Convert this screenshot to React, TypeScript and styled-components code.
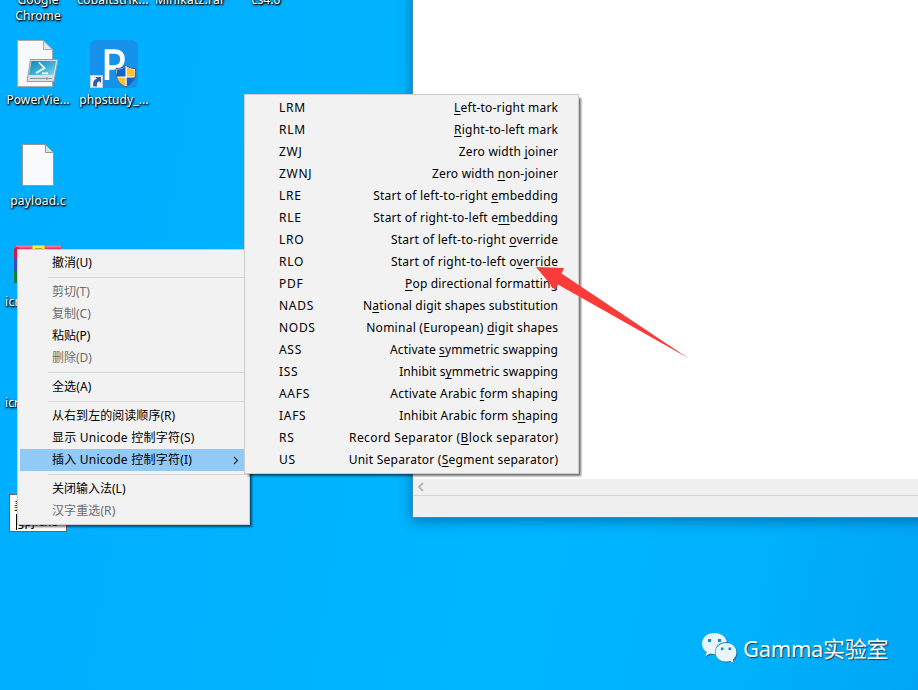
import React from "react";
import styled, { createGlobalStyle, css } from "styled-components";

const Global = createGlobalStyle`
  * { box-sizing: border-box; }
  body { margin: 0; overflow: hidden; }
`;

const uiFont = css`
  font-family: "Noto Sans", "Noto Sans CJK SC", sans-serif;
  font-size: 12px;
`;

const Desktop = styled.main`
  position: relative;
  width: 918px;
  height: 690px;
  overflow: hidden;
  cursor: default;
  background: linear-gradient(100deg, #00adff 0%, #00b2ff 32%, #00b6ff 60%, #00b1fb 82%, #00a6f6 100%);
  ${uiFont}
`;

const Shortcut = styled.div<{ $x: number; $y: number; $w?: number }>`
  position: absolute;
  left: ${(p) => p.$x}px;
  top: ${(p) => p.$y}px;
  width: ${(p) => p.$w ?? 76}px;
  display: flex;
  flex-direction: column;
  align-items: center;
`;

const ShortcutLabel = styled.span<{ $gap?: number; $track?: number }>`
  margin-top: ${(p) => p.$gap ?? 0}px;
  color: #fff;
  line-height: 16px;
  white-space: nowrap;
  text-align: center;
  letter-spacing: ${(p) => p.$track ?? 0.1}px;
  text-shadow: 1px 1px 1px #000, 0 1px 2px rgba(0, 0, 0, 0.85), 1px 1px 3px rgba(0, 0, 0, 0.6);
`;

const EditorWindow = styled.section`
  position: absolute;
  left: 412px;
  top: -10px;
  width: 520px;
  height: 528px;
  display: flex;
  flex-direction: column;
  background: #fff;
  border-left: 1px solid #3d8fb8;
  border-bottom: 1px solid #3d8fb8;
  box-shadow: 0 3px 12px rgba(0, 30, 70, 0.42);
`;

const EditorBody = styled.div`
  flex: 1;
`;

const ScrollTrack = styled.div`
  height: 16px;
  padding: 3px 4px;
  background: #f0f0f0;
  svg { display: block; }
`;

const StatusBar = styled.div`
  height: 22px;
  background: #f0f0f0;
  border-top: 1px solid #d7d7d7;
`;

const RenameBox = styled.div`
  position: absolute;
  left: 9px;
  top: 494px;
  width: 58px;
  height: 38px;
  padding: 3px 3px 0 4px;
  background: #fff;
  border: 1px solid #646464;
  color: #000;
  line-height: 16px;
`;

const RenameLine = styled.div<{ $caret?: boolean }>`
  height: 16px;
  white-space: nowrap;
  margin-left: ${(p) => (p.$caret ? 2 : 0)}px;
  border-left: ${(p) => (p.$caret ? "1px solid #000" : "none")};
`;

const Menu = styled.ul<{ $x: number; $y: number; $w: number }>`
  position: absolute;
  left: ${(p) => p.$x}px;
  top: ${(p) => p.$y}px;
  width: ${(p) => p.$w}px;
  margin: 0;
  padding: 2px;
  list-style: none;
  color: #000;
  background: #f2f2f2;
  border: 1px solid #ccc;
  box-shadow: 3px 3px 2px -1px rgba(0, 0, 0, 0.55);
`;

const MenuItem = styled.li<{ $active?: boolean; $disabled?: boolean; $right?: number }>`
  display: flex;
  align-items: center;
  justify-content: space-between;
  height: 22px;
  padding: 0 ${(p) => p.$right ?? 18}px 0 32px;
  line-height: 22px;
  white-space: nowrap;
  color: ${(p) => (p.$disabled ? "#6d6d6d" : "#000")};
  background: ${(p) => (p.$active ? "#91c9f7" : "transparent")};
`;

const Divider = styled.li`
  height: 1px;
  margin: 3px 0 3px 28px;
  background: #d7d7d7;
`;

const Track = styled.span<{ $track: number }>`
  letter-spacing: ${(p) => p.$track}px;
  margin-right: ${(p) => -p.$track}px;
`;

const Mnemonic = styled.span`
  text-decoration: underline;
  text-decoration-thickness: 1px;
  text-underline-offset: 2px;
  text-decoration-skip-ink: none;
`;

const Pointer = styled.svg`
  position: absolute;
  left: 530px;
  top: 258px;
`;

const Watermark = styled.div`
  position: absolute;
  left: 701px;
  top: 629px;
  display: flex;
  align-items: center;
  gap: 6px;
  color: #fff;
  font-size: 22px;
  line-height: 38px;
  letter-spacing: -0.35px;
  white-space: nowrap;
  text-shadow: 1px 1px 1px rgba(30, 50, 70, 0.9);
  svg { filter: drop-shadow(1px 1px 0 rgba(30, 80, 120, 0.7)); }
`;

const PowerShellFile = () => (
  <svg width="44" height="50" viewBox="0 0 44 50">
    <defs>
      <linearGradient id="ps" x1="0" y1="0" x2="1" y2="1">
        <stop offset="0" stopColor="#1683b4" />
        <stop offset=".5" stopColor="#38aed3" />
        <stop offset="1" stopColor="#87d5e8" />
      </linearGradient>
    </defs>
    <path d="M1.5 1.5h26l9 9v37h-35z" fill="#f8f9fa" stroke="#a6a9ab" />
    <path d="M27.5 1.5v9h9z" fill="#e4e7e9" stroke="#a6a9ab" />
    <path d="M14.500 20.500h27.500l-4 22h-27z" fill="#d9e2e6" stroke="#8ba0a9" />
    <path d="M15.500 22h24.500l-2.500 14h-24.500z" fill="url(#ps)" />
    <path d="M23 23.500l5.500 5.500-8.500 5M26 34.300h6" fill="none" stroke="#fff" strokeWidth="1.700" />
    <path d="M14 39.500h22M31 38v3" stroke="#8b979d" />
  </svg>
);

const PhpStudy = () => (
  <svg width="48" height="48" viewBox="0 0 48 48">
    <rect width="48" height="48" rx="6" fill="#1792ec" />
    <path d="M17 40V11.500h7c6 0 8.500 3 8.500 7.500 0 5-3.500 8.500-9 8.500H17" fill="none" stroke="#fff" strokeWidth="4.600" />
    <path d="M36 25.500c3 2.500 6 3 9.500 3 .5 8-1 14-9.500 18.500-8.500-4.500-10.500-10.500-10-18.500 4 0 7-.5 10-3z" fill="#fff" stroke="#405a70" />
    <path d="M35.500 26.500c-2.500 2-5 2.700-8.500 3v7h8.500z" fill="#1165c1" />
    <path d="M36.700 26.500c2.500 2 5 2.700 8 3v7h-8z" fill="#ffc13b" />
    <path d="M35.500 37.500h-8.400c.8 3.500 3.500 6.500 8.400 8.800z" fill="#ffc13b" />
    <path d="M36.700 37.500h7.900c-.8 3.500-3.500 6.500-7.900 8.800z" fill="#1165c1" />
    <rect x=".5" y="35.500" width="12" height="12" fill="#f3f5f8" stroke="#c7ced5" />
    <path d="M3.500 46.500c-1-4 .3-7 3.500-7.700L5 37h6v6l-1.800-1.800c-2.200.8-2.700 2.600-2.200 5.300z" fill="#2d5fa6" />
  </svg>
);

const BlankFile = () => (
  <svg width="32" height="42" viewBox="0 0 32 42">
    <path d="M.5.500h23l8 8v33H.5z" fill="#f9fafb" stroke="#92979a" />
    <path d="M23.500.500v8h8z" fill="#dcdfe1" stroke="#92979a" />
  </svg>
);

const Archive = () => (
  <svg width="48" height="40" viewBox="0 0 48 40">
    <path d="M2 1h45v12H0z" fill="#eb3568" />
    <path d="M2 1.500h45" stroke="#f1749c" strokeWidth="2" />
    <path d="M0 4q4-4 5 0v10H0z" fill="#d8163f" />
    <path d="M0 13h5v13H0z" fill="#4247b8" />
    <path d="M0 26h5v12H0z" fill="#167b3b" />
    <path d="M18 0h13v7H18z" fill="#ffe746" stroke="#a8971e" />
    <path d="M21 3h7v4h-7z" fill="#b2a33b" />
  </svg>
);

const WeChat = () => (
  <svg width="36" height="32" viewBox="0 0 36 32">
    <path d="M13.500 1C6 1 1 5.700 1 11.800c0 3.500 1.800 6.500 4.900 8.500L4.500 24l4.800-2.400c1.700.5 3.200.7 5 .7C13 15.500 17.500 10 26 10 24.800 4.600 20 1 13.500 1z" fill="#e8f7ff" />
    <path d="M25 11c-6 0-10.500 4-10.500 9.200C14.500 25.600 19 29.600 25 29.600c1.500 0 2.800-.2 4.100-.7l3.600 2-1-3.300c2.300-1.700 3.700-4.300 3.700-7.400C35.400 15 31 11 25 11z" fill="#e8f7ff" />
    <path d="M7 7h3v3H7zM17 7h3v3h-3zM20 15.500h2.500V18H20zM27.500 15.500H30V18h-2.500z" fill="#1689bd" />
  </svg>
);

type Entry = { label: string; disabled?: boolean; active?: boolean; track?: number } | null;

const editMenu: Entry[] = [
  { label: "撤消(U)" },
  null,
  { label: "剪切(T)", disabled: true },
  { label: "复制(C)", disabled: true },
  { label: "粘贴(P)" },
  { label: "删除(D)", disabled: true },
  null,
  { label: "全选(A)", track: 0.1 },
  null,
  { label: "从右到左的阅读顺序(R)", track: 0.05 },
  { label: "显示 Unicode 控制字符(S)", track: 0.23 },
  { label: "插入 Unicode 控制字符(I)", active: true, track: 0.23 },
  null,
  { label: "关闭输入法(L)" },
  { label: "汉字重选(R)", disabled: true, track: 0.1 },
];

// An ampersand precedes the access key; the last value is the tracking in px.
const controlCharacters: [string, string, number][] = [
  ["LRM", "&Left-to-right mark", 0.2],
  ["RLM", "&Right-to-left mark", 0.25],
  ["ZWJ", "Zero width &joiner", 0.2],
  ["ZWNJ", "Zero width &non-joiner", 0.2],
  ["LRE", "Start of left-to-right &embedding", 0.24],
  ["RLE", "Start of right-to-left e&mbedding", 0.24],
  ["LRO", "Start of left-to-right &override", 0.25],
  ["RLO", "Start of right-to-left o&verride", 0.25],
  ["PDF", "&Pop directional formatting", 0.17],
  ["NADS", "N&ational digit shapes substitution", 0.155],
  ["NODS", "Nominal (European) &digit shapes", 0.26],
  ["ASS", "Activate &symmetric swapping", 0.12],
  ["ISS", "Inhibit s&ymmetric swapping", 0.08],
  ["AAFS", "Activate Arabic &form shaping", 0.2],
  ["IAFS", "Inhibit Arabic form s&haping", 0.17],
  ["RS", "Record Separator (&Block separator)", 0.38],
  ["US", "Unit Separator (&Segment separator)", 0.26],
];

const AccessLabel = ({ text, track }: { text: string; track: number }) => {
  const [before, rest] = text.split("&");
  return (
    <Track $track={track}>
      {before}
      <Mnemonic>{rest[0]}</Mnemonic>
      {rest.slice(1)}
    </Track>
  );
};

export default function App() {
  return (
    <>
      <Global />
      <Desktop>
        <Shortcut $x={0} $y={-8}>
          <ShortcutLabel>Google<br />Chrome</ShortcutLabel>
        </Shortcut>
        <Shortcut $x={75} $y={-8}><ShortcutLabel $track={0.2}>cobaltstrik...</ShortcutLabel></Shortcut>
        <Shortcut $x={152} $y={-8}><ShortcutLabel $track={0.25}>Minikatz.rar</ShortcutLabel></Shortcut>
        <Shortcut $x={228} $y={-8}><ShortcutLabel>cs4.0</ShortcutLabel></Shortcut>
        <Shortcut $x={0} $y={39}>
          <PowerShellFile />
          <ShortcutLabel $gap={3}>PowerVie...</ShortcutLabel>
        </Shortcut>
        <Shortcut $x={76} $y={40}>
          <PhpStudy />
          <ShortcutLabel $gap={4}>phpstudy_...</ShortcutLabel>
        </Shortcut>
        <Shortcut $x={0} $y={144}>
          <BlankFile />
          <ShortcutLabel $gap={7} $track={0.2}>payload.c</ShortcutLabel>
        </Shortcut>
        <Shortcut $x={0} $y={245}>
          <Archive />
          <ShortcutLabel $gap={9} $track={0.35}>icrosoft.rar</ShortcutLabel>
        </Shortcut>
        <Shortcut $x={0} $y={395}><ShortcutLabel>icrosoft.exe</ShortcutLabel></Shortcut>
        <RenameBox>
          <RenameLine>美图</RenameLine>
          <RenameLine $caret>gpj.exe</RenameLine>
        </RenameBox>

        <EditorWindow>
          <EditorBody />
          <ScrollTrack>
            <svg width="8" height="10" viewBox="0 0 8 10">
              <path d="M6 1L2 5l4 4" fill="none" stroke="#b8b8b8" strokeWidth="2" />
            </svg>
          </ScrollTrack>
          <StatusBar />
        </EditorWindow>

        <Menu $x={17} $y={249} $w={233}>
          {editMenu.map((item, i) =>
            item ? (
              <MenuItem key={i} $active={item.active} $disabled={item.disabled} $right={7}>
                <Track $track={item.track ?? 0}>{item.label}</Track>
                {item.active && (
                  <svg width="7" height="9" viewBox="0 0 7 9">
                    <path d="M1 1l3.500 3.500L1 8" fill="none" stroke="#222" strokeWidth="1.100" />
                  </svg>
                )}
              </MenuItem>
            ) : (
              <Divider key={i} />
            )
          )}
        </Menu>

        <Menu $x={244} $y={94} $w={335}>
          {controlCharacters.map(([code, text, track]) => (
            <MenuItem key={code}>
              <Track $track={0.7}>{code}</Track>
              <AccessLabel text={text} track={track} />
            </MenuItem>
          ))}
        </Menu>

        <Pointer width="162" height="104" viewBox="0 0 162 104">
          <path d="M6 9L34 10l-2.500 5.500L158 100 28 26.500 25 32z" fill="#fb3a3a" />
        </Pointer>

        <Watermark>
          <WeChat />
          <span>Gamma实验室</span>
        </Watermark>
      </Desktop>
    </>
  );
}
